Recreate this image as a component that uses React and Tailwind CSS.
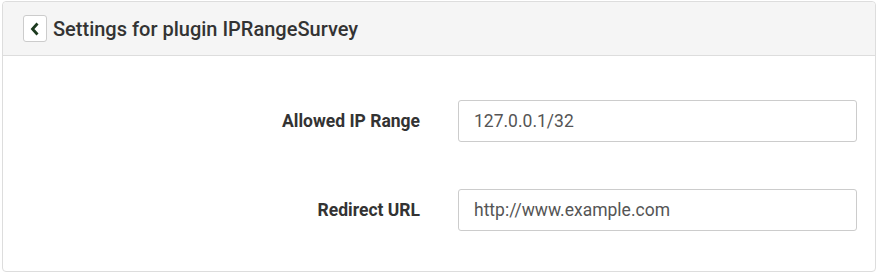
import React from "react";

const Field = ({ label, value }) => (
  <div className="flex items-center">
    <label className="w-[417px] text-right text-[17.5px] font-bold text-[#333]">{label}</label>
    <input
      type="text"
      defaultValue={value}
      className="ml-[38px] h-[42px] w-[399px] rounded-[3px] border border-[#ccc] bg-white px-[15px] text-[17.5px] text-[#555] outline-none"
    />
  </div>
);

const App = () => {
  return (
    <div className="min-h-screen bg-white pl-[2px] pt-[1px] font-['Roboto',sans-serif]">
      <div className="w-[874px] rounded-[4px] border border-[#ddd] bg-white">
        {/* Header */}
        <div className="flex h-[54px] items-center gap-[6px] rounded-t-[4px] border-b border-[#ddd] bg-[#f5f5f5] pl-[20px]">
          <button className="flex h-[27px] w-[24px] items-center justify-center rounded-[3px] border border-[#ccc] bg-white">
            <svg width="10" height="14" viewBox="0 0 10 14">
              <path d="M7.5 1.5 L2.5 7 L7.5 12.5" fill="none" stroke="#1d3b1f" strokeWidth="2.8" strokeLinejoin="miter" />
            </svg>
          </button>
          <span className="text-[20px] font-medium text-[#333]">Settings for plugin IPRangeSurvey</span>
        </div>

        {/* Body */}
        <div className="flex flex-col gap-[47px] pb-[40px] pt-[44px]">
          <Field label="Allowed IP Range" value="127.0.0.1/32" />
          <Field label="Redirect URL" value="http://www.example.com" />
        </div>
      </div>
    </div>
  );
};

export default App;
